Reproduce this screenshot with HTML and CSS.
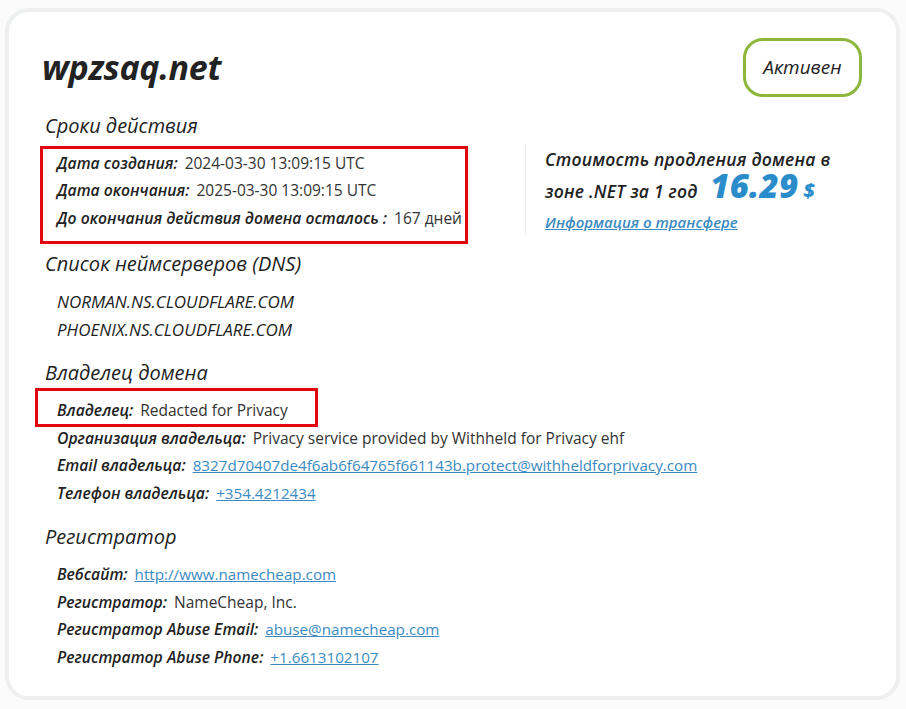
FILE: index.html
```html
<!DOCTYPE html>
<html lang="ru">
<head>
<meta charset="utf-8">
<title>wpzsaq.net</title>
<link rel="stylesheet" href="styles.css">
</head>
<body>
<div class="card">
  <div class="header">
    <h1 class="domain">wpzsaq.net</h1>
    <div class="badge">Активен</div>
  </div>

  <h2 class="section-title first">Сроки действия</h2>
  <div class="terms">
    <div class="terms-left">
      <div class="rows hl hl-dates">
        <div class="row"><span class="label">Дата создания:</span><span class="value">2024-03-30 13:09:15 UTC</span></div>
        <div class="row"><span class="label">Дата окончания:</span><span class="value">2025-03-30 13:09:15 UTC</span></div>
        <div class="row"><span class="label">До окончания действия домена осталось :</span><span class="value">167 дней</span></div>
      </div>
    </div>
    <div class="price">
      <div class="price-text line1">Стоимость продления домена в</div>
      <div class="price-text line2">зоне .NET за 1 год <span class="amount">16.29</span> <span class="currency">$</span></div>
      <a class="transfer" href="#">Информация о трансфере</a>
    </div>
  </div>

  <h2 class="section-title">Список неймсерверов (DNS)</h2>
  <div class="rows">
    <div class="row ns">NORMAN.NS.CLOUDFLARE.COM</div>
    <div class="row ns">PHOENIX.NS.CLOUDFLARE.COM</div>
  </div>

  <h2 class="section-title">Владелец домена</h2>
  <div class="rows">
    <div class="row hl hl-owner"><span class="label">Владелец:</span><span class="value">Redacted for Privacy</span></div>
    <div class="row"><span class="label">Организация владельца:</span><span class="value">Privacy service provided by Withheld for Privacy ehf</span></div>
    <div class="row"><span class="label">Email владельца:</span><a class="link" href="#">8327d70407de4f6ab6f64765f661143b.protect@withheldforprivacy.com</a></div>
    <div class="row"><span class="label">Телефон владельца:</span><a class="link" href="#">+354.4212434</a></div>
  </div>

  <h2 class="section-title">Регистратор</h2>
  <div class="rows">
    <div class="row"><span class="label">Вебсайт:</span><a class="link" href="#">http://www.namecheap.com</a></div>
    <div class="row"><span class="label">Регистратор:</span><span class="value">NameCheap, Inc.</span></div>
    <div class="row"><span class="label">Регистратор Abuse Email:</span><a class="link" href="#">abuse@namecheap.com</a></div>
    <div class="row"><span class="label">Регистратор Abuse Phone:</span><a class="link" href="#">+1.6613102107</a></div>
  </div>
</div>
</body>
</html>
```

FILE: styles.css
```css
html, body {
  margin: 0;
  padding: 0;
}
body {
  background: #fbfbfb;
  padding: 8px 6px 0 5px;
  font-family: "Open Sans", "Noto Sans", sans-serif;
  color: #222;
}
.card {
  box-sizing: border-box;
  height: 692px;
  background: #fff;
  border: 4px solid #eeefef;
  border-radius: 24px;
  padding: 25px 34px 0 33px;
}
.header {
  display: flex;
  justify-content: space-between;
  align-items: center;
  height: 60px;
}
.domain {
  margin: 0;
  font-size: 34px;
  font-weight: 700;
  font-style: italic;
  color: #222;
  letter-spacing: -0.3px;
}
.badge {
  box-sizing: border-box;
  width: 119px;
  height: 59px;
  border: 3px solid #8db63c;
  border-radius: 20px;
  display: flex;
  align-items: center;
  justify-content: center;
  font-style: italic;
  font-size: 19px;
  color: #222;
}
.section-title {
  margin: 16px 0 10px 3px;
  font-size: 20px;
  line-height: 28px;
  font-weight: 400;
  font-style: italic;
  color: #222;
}
.section-title.first {
  margin: 15px 0 9.5px 3px;
}
.rows {
  margin-left: 15px;
}
.row {
  font-size: 15.5px;
  line-height: 27.5px;
  white-space: nowrap;
}
.label {
  font-style: italic;
  font-weight: 600;
  font-size: 15.7px;
  color: #222;
  margin-right: 7px;
}
.value {
  color: #333;
}
.ns {
  font-style: italic;
  font-size: 17px;
  color: #222;
}
.link {
  color: #3b8bc2;
  font-size: 15.2px;
  text-decoration: underline;
}
.hl {
  position: relative;
}
.hl::after {
  content: "";
  position: absolute;
  border: 3px solid #e3060f;
  pointer-events: none;
}
.hl-dates {
  display: inline-block;
}
.hl-dates::after {
  left: -17px;
  top: -4px;
  right: -6px;
  bottom: -12px;
}
.hl-owner::after {
  left: -22px;
  top: -9px;
  width: 277px;
  height: 33px;
}
.terms {
  display: flex;
  align-items: flex-start;
}
.terms-left {
  width: 483px;
  flex: none;
  padding-bottom: 2px;
}
.price {
  margin: -6px 0 -6px;
  border-left: 1px solid #eeeeee;
  padding-left: 19px;
}
.price-text {
  font-style: italic;
  font-weight: 600;
  font-size: 17.5px;
  color: #222;
  letter-spacing: 0.2px;
}
.line1 {
  line-height: 30px;
}
.line2 {
  line-height: 34px;
}
.amount {
  color: #2b8ccc;
  font-weight: 800;
  font-size: 33px;
  line-height: 0;
  margin-left: 8px;
  letter-spacing: 0.3px;
}
.currency {
  color: #2b8ccc;
  font-weight: 800;
  font-size: 20px;
  line-height: 0;
}
.transfer {
  display: block;
  width: max-content;
  line-height: 28px;
  font-style: italic;
  font-weight: 600;
  font-size: 15px;
  color: #3b8bc2;
  text-decoration: underline;
}
```
